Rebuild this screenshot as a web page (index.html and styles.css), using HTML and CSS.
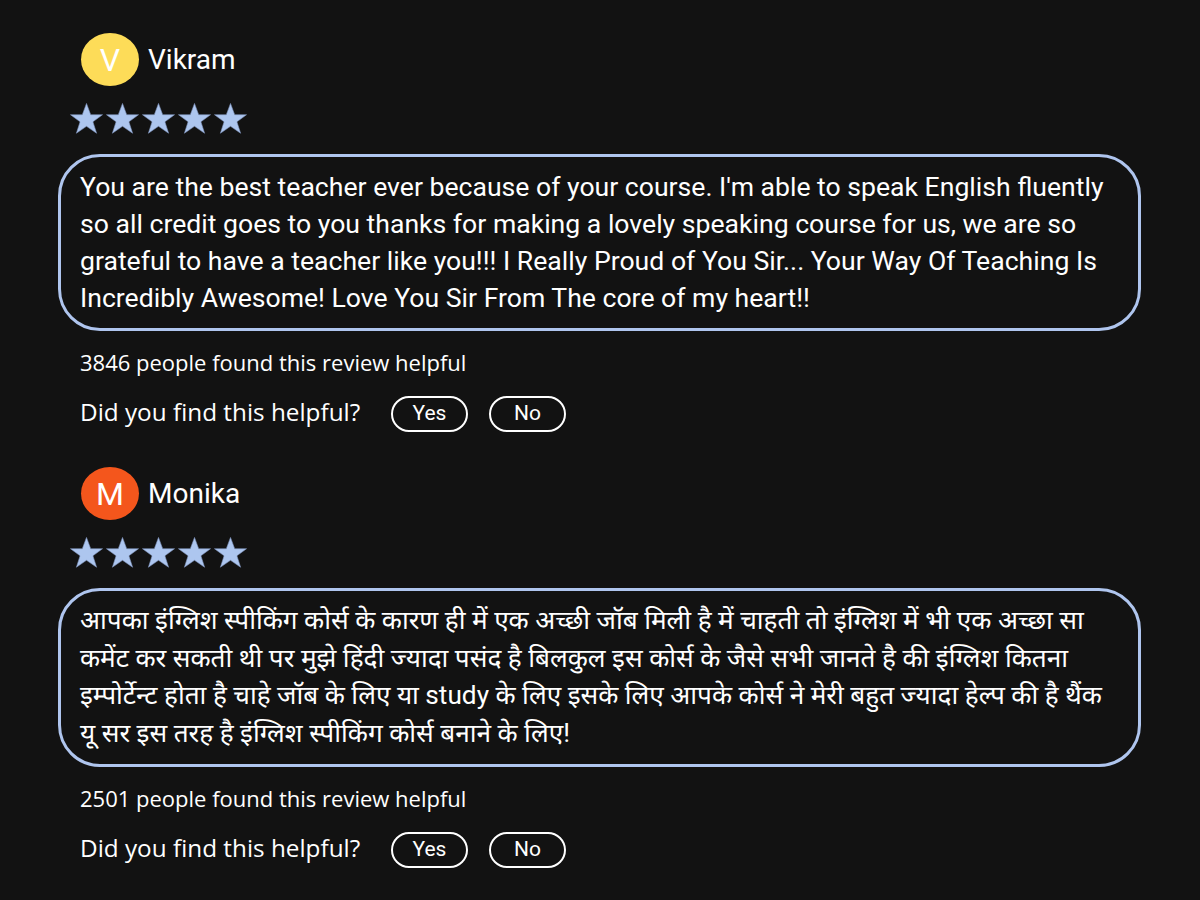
FILE: index.html
```html
<!DOCTYPE html>
<html lang="en">
<head>
<meta charset="utf-8">
<title>Reviews</title>
<link rel="stylesheet" href="styles.css">
</head>
<body>
<main class="reviews">
  <article class="review">
    <div class="review-head">
      <div class="avatar avatar-yellow">V</div>
      <div class="name">Vikram</div>
    </div>
    <div class="stars">
      <svg viewBox="0 0 36 36" class="star"><path d="M18 2.5l4.3 11.6h12.2l-9.9 7.3 3.8 11.8L18 26l-10.4 7.2 3.8-11.8-9.9-7.3h12.2z"/></svg>
      <svg viewBox="0 0 36 36" class="star"><path d="M18 2.5l4.3 11.6h12.2l-9.9 7.3 3.8 11.8L18 26l-10.4 7.2 3.8-11.8-9.9-7.3h12.2z"/></svg>
      <svg viewBox="0 0 36 36" class="star"><path d="M18 2.5l4.3 11.6h12.2l-9.9 7.3 3.8 11.8L18 26l-10.4 7.2 3.8-11.8-9.9-7.3h12.2z"/></svg>
      <svg viewBox="0 0 36 36" class="star"><path d="M18 2.5l4.3 11.6h12.2l-9.9 7.3 3.8 11.8L18 26l-10.4 7.2 3.8-11.8-9.9-7.3h12.2z"/></svg>
      <svg viewBox="0 0 36 36" class="star"><path d="M18 2.5l4.3 11.6h12.2l-9.9 7.3 3.8 11.8L18 26l-10.4 7.2 3.8-11.8-9.9-7.3h12.2z"/></svg>
    </div>
    <div class="review-box">
      <p class="review-text">You are the best teacher ever because of your course. I'm able to speak English fluently so all credit goes to you thanks for making a lovely speaking course for us, we are so grateful to have a teacher like you!!! I Really Proud of You Sir... Your Way Of Teaching Is Incredibly Awesome! Love You Sir From The core of my heart!!</p>
    </div>
    <p class="helpful-count">3846 people found this review helpful</p>
    <div class="helpful-ask">
      <span class="ask-label">Did you find this helpful?</span>
      <button class="pill">Yes</button>
      <button class="pill">No</button>
    </div>
  </article>

  <article class="review">
    <div class="review-head">
      <div class="avatar avatar-orange">M</div>
      <div class="name">Monika</div>
    </div>
    <div class="stars">
      <svg viewBox="0 0 36 36" class="star"><path d="M18 2.5l4.3 11.6h12.2l-9.9 7.3 3.8 11.8L18 26l-10.4 7.2 3.8-11.8-9.9-7.3h12.2z"/></svg>
      <svg viewBox="0 0 36 36" class="star"><path d="M18 2.5l4.3 11.6h12.2l-9.9 7.3 3.8 11.8L18 26l-10.4 7.2 3.8-11.8-9.9-7.3h12.2z"/></svg>
      <svg viewBox="0 0 36 36" class="star"><path d="M18 2.5l4.3 11.6h12.2l-9.9 7.3 3.8 11.8L18 26l-10.4 7.2 3.8-11.8-9.9-7.3h12.2z"/></svg>
      <svg viewBox="0 0 36 36" class="star"><path d="M18 2.5l4.3 11.6h12.2l-9.9 7.3 3.8 11.8L18 26l-10.4 7.2 3.8-11.8-9.9-7.3h12.2z"/></svg>
      <svg viewBox="0 0 36 36" class="star"><path d="M18 2.5l4.3 11.6h12.2l-9.9 7.3 3.8 11.8L18 26l-10.4 7.2 3.8-11.8-9.9-7.3h12.2z"/></svg>
    </div>
    <div class="review-box">
      <p class="review-text hindi" lang="hi">आपका इंग्लिश स्पीकिंग कोर्स के कारण ही में एक अच्छी जॉब मिली है में चाहती तो इंग्लिश में भी एक अच्छा सा कमेंट कर सकती थी पर मुझे हिंदी ज्यादा पसंद है बिलकुल इस कोर्स के जैसे सभी जानते है की इंग्लिश कितना इम्पोर्टेन्ट होता है चाहे जॉब के लिए या study के लिए इसके लिए आपके कोर्स ने मेरी बहुत ज्यादा हेल्प की है थैंक यू सर इस तरह है इंग्लिश स्पीकिंग कोर्स बनाने के लिए!</p>
    </div>
    <p class="helpful-count">2501 people found this review helpful</p>
    <div class="helpful-ask">
      <span class="ask-label">Did you find this helpful?</span>
      <button class="pill">Yes</button>
      <button class="pill">No</button>
    </div>
  </article>
</main>
</body>
</html>
```

FILE: styles.css
```css
html, body {
  margin: 0;
  padding: 0;
  background: #121212;
  color: #ffffff;
}

body {
  font-family: Roboto, "Noto Sans", sans-serif;
}

.reviews {
  width: 1083px;
  margin-left: 58px;
  padding-top: 33px;
}

.review {
  margin-bottom: 35px;
}

.review-head {
  display: flex;
  align-items: center;
  gap: 9px;
  margin-left: 23px;
}

.avatar {
  width: 58px;
  height: 53px;
  border-radius: 50%;
  display: flex;
  align-items: center;
  justify-content: center;
  font-size: 32px;
  color: #ffffff;
}

.avatar-yellow { background: #fddc58; }
.avatar-orange { background: #f4561c; }

.name {
  font-size: 28px;
}

.stars {
  display: flex;
  gap: 1px;
  margin-top: 15px;
  margin-left: 11px;
}

.star {
  width: 35px;
  height: 35px;
  fill: #adc6ef;
  stroke: #7f95bd;
  stroke-width: 0.6;
}

.review-box {
  margin-top: 18px;
  border: 3px solid #afc5ee;
  border-radius: 42px;
  padding: 11px 18px 12px 19px;
}

.review-text {
  margin: 0;
  font-size: 26.6px;
  line-height: 37px;
}

.review-text.hindi {
  font-size: 26.2px;
  line-height: 37.5px;
}

.helpful-count {
  margin: 18px 0 0 22px;
  font-family: "Open Sans", sans-serif;
  font-size: 22px;
  line-height: 26px;
}

.helpful-ask {
  display: flex;
  align-items: center;
  margin: 16px 0 0 22px;
}

.ask-label {
  font-family: "Open Sans", sans-serif;
  font-size: 24.3px;
  width: 311px;
}

.pill {
  width: 77px;
  height: 36px;
  margin-top: 5px;
  border: 2px solid #ffffff;
  border-radius: 18px;
  background: transparent;
  color: #ffffff;
  font-family: Roboto, sans-serif;
  font-size: 21px;
  padding: 0 0 2px;
  margin-right: 21px;
}
```
